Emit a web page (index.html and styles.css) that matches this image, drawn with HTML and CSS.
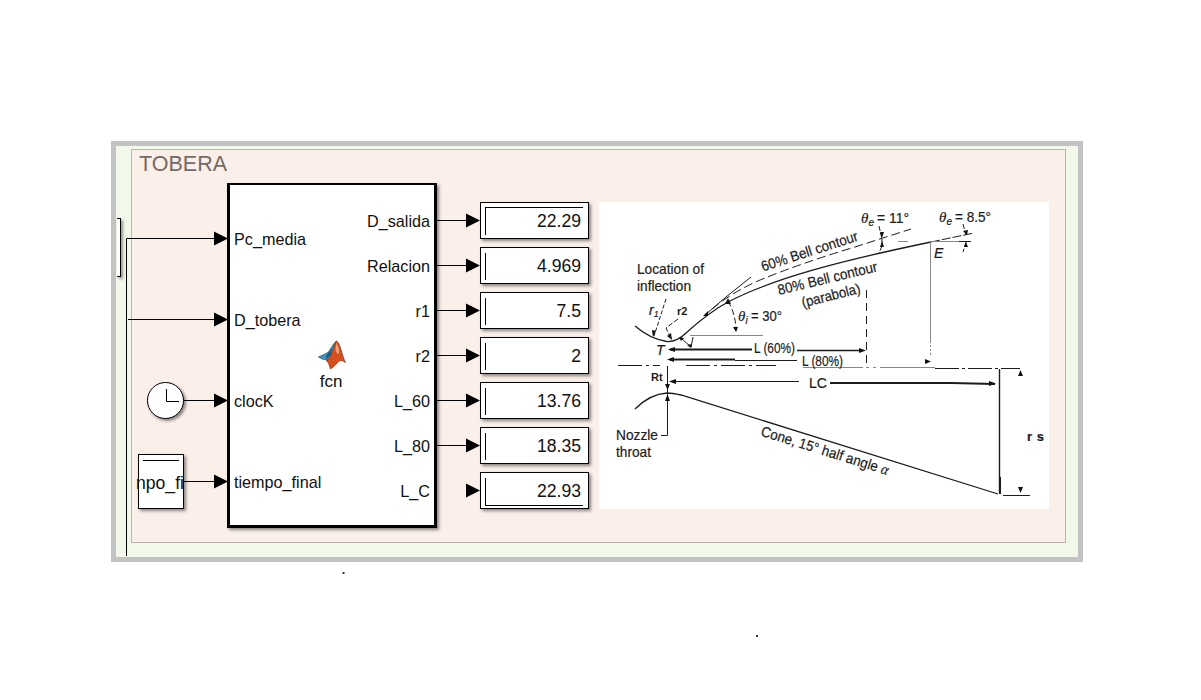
FILE: index.html
```html
<!DOCTYPE html>
<html lang="es">
<head>
<meta charset="utf-8">
<title>Tobera</title>
<link rel="stylesheet" href="styles.css">
</head>
<body>
<main class="canvas">
  <section class="frame"><div class="area"><h1 class="area-title">TOBERA</h1></div></section>
  <div class="cut-block"></div>

  <div class="block fcn-block">
    <div class="ports ports-in"><span>Pc_media</span><span>D_tobera</span><span>clocK</span><span>tiempo_final</span></div>
    <div class="fcn">
      <svg class="logo" viewBox="0 0 28 30" width="28" height="30">
        <path d="M0.5 17 L8 13.500 Q11 12.500 13 8 Q16 3 18 1.500 L16 14 L10 22 Q8 18.500 5.500 19.500Z" fill="#3a94c4" stroke="#174c70" stroke-width=".7"/>
        <path d="M8 16 L14 8 L12.500 15 L8 19Z" fill="#1d5a82"/>
        <path d="M18.500 1 Q21 2 24 13 Q26 20 27.500 22.500 Q23 19 20 22 Q17 26 12.500 29 Q11 23 8.500 20 Q13 17 15 9 Q17 1.500 18.500 1Z" fill="#d4501f" stroke="#7a2b12" stroke-width=".7"/>
        <path d="M18.500 3 Q22 9 21 14 Q18 14 17.500 9Z" fill="#f2a078"/>
      </svg>
      <span>fcn</span>
    </div>
    <div class="ports ports-out"><span>D_salida</span><span>Relacion</span><span>r1</span><span>r2</span><span>L_60</span><span>L_80</span><span>L_C</span></div>
  </div>

  <div class="clock"></div>
  <div class="block const-block"><span>npo_fi</span></div>

  <div class="displays">
    <div class="block display first">22.29</div>
    <div class="block display">4.969</div>
    <div class="block display">7.5</div>
    <div class="block display">2</div>
    <div class="block display">13.76</div>
    <div class="block display">18.35</div>
    <div class="block display last">22.93</div>
  </div>
  <div class="picture"></div>

  <svg class="overlay" viewBox="0 0 1201 700" width="1201" height="700">
    <defs>
      <path id="head" d="M-14 -7 L0 0 L-14 7Z"/>
      <path id="tip" d="M0 0 L7 -2.500 L7 2.500Z"/>
    </defs>
    <!-- wires -->
    <g class="wire">
      <path d="M126.500 556V238.500H216M128 319.500H216M184 400.500H216M184 481.500H216"/>
      <path d="M437 220.500H468M437 265.500H468M437 310.500H468M437 355.500H468M437 400.500H468M437 445.500H468"/>
      <path d="M166.500 389V401.500H179"/>
      <path d="M143 460.500H179"/>
    </g>
    <g>
      <use href="#head" x="228" y="238.500"/><use href="#head" x="228" y="319.500"/><use href="#head" x="228" y="400.500"/><use href="#head" x="228" y="481.500"/>
      <use href="#head" x="480" y="220.500"/><use href="#head" x="480" y="265.500"/><use href="#head" x="480" y="310.500"/><use href="#head" x="480" y="355.500"/><use href="#head" x="480" y="400.500"/><use href="#head" x="480" y="445.500"/><use href="#head" x="480" y="490.500"/>
    </g>
    <!-- nozzle contours -->
    <g class="ink">
      <path d="M635 326Q650 339 667 341.500Q677 342 686 333C697 323 713 310 728 302C774 278 840 261 931 242" stroke-width="1.300"/>
      <path d="M705 315L726 297L751 277"/>
      <path d="M712 309Q735 290 765 278Q805 262 855 247L911 229" stroke-dasharray="9 4"/>
      <path d="M931 242L974 233" stroke-dasharray="9 2"/>
      <path d="M931 241.500H971" class="soft"/><path d="M959 241.500H971"/>
      <path d="M898 241.500H908" class="soft"/>
      <path d="M930.500 242V343" class="soft"/><path d="M930.500 345V357" class="soft" stroke-dasharray="2 2"/>
      <path d="M866.500 290V367" stroke-dasharray="8 5"/>
      <path d="M690 335.500H763" class="soft"/>
      <path d="M618 365.500H660M686 365.500H776" stroke-dasharray="24 4 3 4"/>
      <path d="M803 367.500H935" class="soft" stroke-dasharray="60 3 3 4 3 4"/>
      <path d="M935 368.500H1020" stroke-dasharray="24 3 3 3"/>
      <path d="M635 409Q650 394 667 393Q672 393 681 395L998 494" stroke-width="1.300"/>
      <path d="M999.500 369V493" stroke-width="1.400"/><path d="M1000 477V494" stroke-width="2"/>
      <path d="M1003 495.500H1030"/>
      <path d="M667.500 366V435.500H661"/>
      <path d="M666 299L654 336" stroke-dasharray="4 2"/>
      <path d="M678 319L666 328L671 338" stroke-dasharray="5 2"/>
      <path d="M681 338L691 347L693 337"/>
      <path d="M728 301Q736 315 736 331" stroke-dasharray="6 3"/>
      <path d="M879 226L882 239M882 239V246L879 253" stroke-dasharray="5 2"/>
      <path d="M963 224L966 235M966 242L963 252" stroke-dasharray="5 2"/>
    </g>
    <!-- dimension lines -->
    <g class="ink">
      <path d="M670 349.500H752" stroke-width="2"/><path d="M797 350.500H862" stroke-width="1.600"/>
      <path d="M670 359.500H735" stroke-width="1.800"/><path d="M735 360.500H797"/>
      <path d="M672 381.500H799"/><path d="M830 383H951L995 384" stroke-width="1.900"/>
    </g>
    <g class="heads">
      <use href="#tip" x="668" y="349.500"/><use href="#tip" x="667" y="359.500"/><use href="#tip" x="669" y="381.500"/>
      <path d="M866 350.500L859 348V353ZM931 361.500L925 359V364ZM996 383.500L989 381V386Z"/>
      <path d="M1020.500 370L1018 376H1023ZM1020.500 493L1018 487H1023Z"/>
      <path d="M667.500 390L665 384H670ZM667.500 394L665 401H670Z"/>
      <path d="M653 337L652 330L656 331ZM672 340L667 336L671 333ZM679 337L684 338L681 341ZM691 348L687 345L692 344Z"/>
      <path d="M728 298L725 304L731 304ZM736 332L733 327L738 327ZM882 238L880 232H884ZM882 241L880 247H884ZM967 235L963 231L968 230ZM966 242L964 247H968ZM703 316L708 311L708 316Z"/>
    </g>
    <!-- captions -->
    <g class="caption">
      <text x="637" y="273.500" textLength="67" lengthAdjust="spacingAndGlyphs">Location of</text>
      <text x="637" y="291" textLength="54" lengthAdjust="spacingAndGlyphs">inflection</text>
      <text x="616" y="440" textLength="42" lengthAdjust="spacingAndGlyphs">Nozzle</text>
      <text x="616" y="457" textLength="35" lengthAdjust="spacingAndGlyphs">throat</text>
      <text transform="translate(763 271.500) rotate(-18)" textLength="101" lengthAdjust="spacingAndGlyphs">60% Bell contour</text>
      <text transform="translate(779 295) rotate(-13.500)" textLength="102" lengthAdjust="spacingAndGlyphs">80% Bell contour</text>
      <text transform="translate(803 307.500) rotate(-14)" textLength="60" lengthAdjust="spacingAndGlyphs">(parabola)</text>
      <text transform="translate(760 435.500) rotate(17.300)" textLength="133" lengthAdjust="spacingAndGlyphs">Cone, 15° half angle <tspan class="greek">α</tspan></text>
      <text x="649" y="315" class="slanted">r<tspan class="index" dy="2">1</tspan></text>
      <text x="677" y="315" class="small">r2</text>
      <text x="656" y="355" class="slanted">T</text>
      <text x="934" y="257.500" class="slanted">E</text>
      <text x="651" y="381" class="small">Rt</text>
      <text x="738" y="321"><tspan class="greek">θ</tspan><tspan class="sub" dy="3">i</tspan></text>
      <text x="751" y="321" textLength="31" lengthAdjust="spacingAndGlyphs">= 30°</text>
      <text x="861" y="223"><tspan class="greek">θ</tspan><tspan class="sub" dy="3">e</tspan></text>
      <text x="877" y="223" textLength="32" lengthAdjust="spacingAndGlyphs">= 11°</text>
      <text x="939" y="222"><tspan class="greek">θ</tspan><tspan class="sub" dy="3">e</tspan></text>
      <text x="955" y="222" textLength="36" lengthAdjust="spacingAndGlyphs">= 8.5°</text>
      <text x="754" y="353" textLength="41" lengthAdjust="spacingAndGlyphs">L (60%)</text>
      <text x="802" y="365.500" textLength="41" lengthAdjust="spacingAndGlyphs">L (80%)</text>
      <text x="809" y="388" textLength="18" lengthAdjust="spacingAndGlyphs">LC</text>
      <text x="1027" y="441" class="bold" textLength="17">r s</text>
    </g>
    <path d="M342.500 572h2v2h-2zM756 635h2v2h-2z" fill="#333"/>
  </svg>
</main>
</body>
</html>
```
FILE: styles.css
```css
body { margin: 0; background: #fff; font-family: "Liberation Sans", Arial, sans-serif; color: #111; }
.canvas { position: relative; width: 1201px; height: 700px; overflow: hidden; }
.frame { position: absolute; left: 111px; top: 141px; width: 972px; height: 421px; box-sizing: border-box; border: 5px solid #c3c3c3; background: #f2f8ea; padding: 3px 12px 14px 15px; display: flex; }
.area { flex: 1; border: 1px solid #bdb5ad; background: #fbefea; }
.area-title { margin: 1px 0 0 7px; font-size: 21.5px; line-height: 26px; font-weight: 400; color: #746a67; }

.block { box-sizing: border-box; border: 1px solid #000; background: #fff; box-shadow: 2px 2px 3px rgba(0, 0, 0, .45); }
.cut-block { position: absolute; left: 117px; top: 218px; width: 4px; height: 59px; box-sizing: border-box; border: 1px solid #000; border-left: 0; background: #fff; box-shadow: 2px 2px 3px rgba(0, 0, 0, .4); }

.fcn-block { position: absolute; left: 227px; top: 183px; width: 210px; height: 345px; border-width: 2px 3px 3px 3px; display: flex; justify-content: space-between; font-size: 16.2px; }
.ports { display: flex; flex-direction: column; }
.ports-in { padding: 14px 0 0 4px; }
.ports-in span { height: 81px; line-height: 81px; }
.ports-out { padding: 14px 4px 0 0; text-align: right; }
.ports-out span { height: 45px; line-height: 45px; }
.fcn { display: flex; flex-direction: column; align-items: center; padding-top: 155px; line-height: 23px; position: absolute; left: 88px; font-size: 17px; }
.fcn span { margin-left: -2px; }
.logo { display: block; }

.clock { position: absolute; left: 147px; top: 382px; width: 37px; height: 37px; box-sizing: border-box; border: 1px solid #000; border-radius: 50%; background: #fff; box-shadow: 2px 2px 3px rgba(0, 0, 0, .45); }
.const-block { position: absolute; left: 138px; top: 454px; width: 46px; height: 55px; font-size: 17.6px; line-height: 56px; }
.const-block span { display: block; width: 47px; margin-left: -3px; overflow: hidden; white-space: nowrap; }

.displays { position: absolute; left: 480px; top: 202px; width: 109px; display: flex; flex-direction: column; gap: 8px; }
.display { height: 37px; padding: 5px 7px 3px 4px; line-height: 27px; font-size: 17.6px; text-align: right; background: linear-gradient(#000, #000) 4px 5px / 1px 27px no-repeat #fff; }
.display.first { background: linear-gradient(#000, #000) 4px 4px / 98px 1px no-repeat, linear-gradient(#000, #000) 4px 5px / 1px 27px no-repeat #fff; }
.display.last { background: linear-gradient(#000, #000) 4px 32px / 98px 1px no-repeat, linear-gradient(#000, #000) 4px 5px / 1px 27px no-repeat #fff; }

.picture { position: absolute; left: 599px; top: 202px; width: 450px; height: 307px; background: #fff; }
.overlay { position: absolute; left: 0; top: 0; }
.wire { fill: none; stroke: #000; stroke-width: 1; }
.ink { fill: none; stroke: #1c1c1c; stroke-width: 1; }
.soft { stroke: #888; }
.heads { fill: #111; }
.caption { font-size: 14.5px; fill: #1c1c1c; stroke: #1c1c1c; stroke-width: .2px; }
.greek { font-family: "Liberation Serif", serif; font-style: italic; font-size: 15px; }
.sub { font-size: 10px; font-style: italic; }
.index { font-size: 9px; }
.slanted { font-style: italic; font-size: 14px; }
.small { font-size: 11px; font-weight: 700; stroke: none; }
.bold { font-size: 13px; font-weight: 700; }
```
